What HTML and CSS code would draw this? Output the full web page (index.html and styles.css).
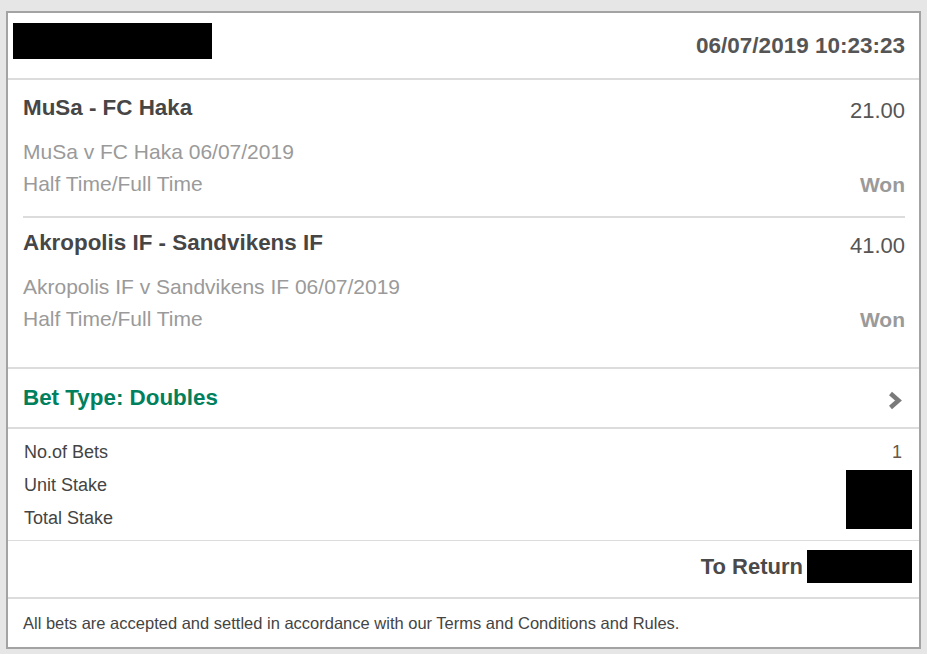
FILE: index.html
```html
<!DOCTYPE html>
<html lang="en">
<head>
<meta charset="utf-8">
<title>Bet receipt</title>
<link rel="stylesheet" href="styles.css">
</head>
<body>
<div class="card">
  <div class="header">
    <div class="redact redact-logo"></div>
    <div class="datetime">06/07/2019 10:23:23</div>
  </div>

  <div class="selections">
    <div class="selection">
      <div class="sel-top">
        <div class="sel-title">MuSa - FC Haka</div>
        <div class="sel-odds">21.00</div>
      </div>
      <div class="sel-event">MuSa v FC Haka 06/07/2019</div>
      <div class="sel-bottom">
        <div class="sel-market">Half Time/Full Time</div>
        <div class="sel-result">Won</div>
      </div>
    </div>
    <div class="selection">
      <div class="sel-top">
        <div class="sel-title">Akropolis IF - Sandvikens IF</div>
        <div class="sel-odds">41.00</div>
      </div>
      <div class="sel-event">Akropolis IF v Sandvikens IF 06/07/2019</div>
      <div class="sel-bottom">
        <div class="sel-market">Half Time/Full Time</div>
        <div class="sel-result">Won</div>
      </div>
    </div>
  </div>

  <div class="bet-type">
    <div class="bet-type-label">Bet Type: Doubles</div>
    <svg class="chevron" width="14" height="19" viewBox="0 0 14 19" aria-hidden="true">
      <polyline points="2.5,2.5 10.5,9.5 2.5,16.5" fill="none" stroke="#7a7a7a" stroke-width="4.5" stroke-linejoin="miter"/>
    </svg>
  </div>

  <div class="stakes">
    <div class="stake-label">No.of Bets</div>
    <div class="stake-value">1</div>
    <div class="stake-label">Unit Stake</div>
    <div class="redact redact-stake"></div>
    <div class="stake-label">Total Stake</div>
  </div>

  <div class="to-return">
    <div class="to-return-label">To Return</div>
    <div class="redact redact-return"></div>
  </div>

  <div class="footer">All bets are accepted and settled in accordance with our Terms and Conditions and Rules.</div>
</div>
</body>
</html>
```

FILE: styles.css
```css
html, body {
  margin: 0;
  padding: 0;
}

body {
  background: #e6e6e6;
  font-family: "Liberation Sans", Arial, sans-serif;
  color: #444;
  padding: 11px 0 0 6px;
  height: 654px;
  box-sizing: border-box;
  overflow: hidden;
}

.card {
  width: 915px;
  box-sizing: border-box;
  border: 2px solid #a3a3a3;
  background: #fff;
}

.redact {
  background: #000;
}

.header {
  height: 65px;
  border-bottom: 2px solid #dcdcdc;
  display: flex;
  justify-content: space-between;
  align-items: center;
  padding: 0 14px 0 5px;
}

.redact-logo {
  width: 199px;
  height: 36px;
  align-self: flex-start;
  margin-top: 10px;
}

.datetime {
  font-size: 22.5px;
  font-weight: bold;
  color: #555;
  line-height: 26px;
  margin-top: 1px;
}

.selections {
  padding: 3px 14px 16px 15px;
  border-bottom: 2px solid #dcdcdc;
}

.selection {
  padding: 11px 0 16px;
}

.selection + .selection {
  border-top: 2px solid #dcdcdc;
}

.sel-top,
.sel-bottom {
  display: flex;
  justify-content: space-between;
  align-items: flex-start;
}

.sel-top {
  height: 28px;
}

.sel-bottom {
  height: 32px;
}

.sel-title {
  font-size: 22.4px;
  font-weight: bold;
  color: #464646;
  line-height: 28px;
}

.sel-odds {
  font-size: 22px;
  color: #555;
  line-height: 28px;
  margin-top: 3px;
}

.sel-event {
  margin-top: 14px;
  font-size: 21px;
  line-height: 32px;
  color: #9a9a9a;
}

.sel-market {
  font-size: 21px;
  line-height: 32px;
  color: #9a9a9a;
}

.sel-result {
  font-size: 21px;
  font-weight: bold;
  line-height: 32px;
  color: #9a9a9a;
  margin-top: 1px;
}

.bet-type {
  height: 58px;
  border-bottom: 2px solid #dcdcdc;
  display: flex;
  justify-content: space-between;
  align-items: center;
  padding: 0 17px 0 15px;
}

.bet-type-label {
  font-size: 22.4px;
  font-weight: bold;
  color: #00805c;
}

.chevron {
  display: block;
  margin-top: 4px;
}

.stakes {
  display: grid;
  grid-template-columns: 1fr auto;
  grid-auto-rows: 33px;
  padding: 7px 7px 5px 16px;
  border-bottom: 1px solid #dcdcdc;
}

.stake-label {
  grid-column: 1;
  font-size: 18px;
  line-height: 33px;
  color: #444;
}

.stake-value {
  grid-column: 2;
  justify-self: end;
  font-size: 18px;
  line-height: 33px;
  color: #6a5645;
  margin-right: 10px;
}

.redact-stake {
  grid-column: 2;
  grid-row: 2 / span 2;
  justify-self: end;
  align-self: start;
  width: 66px;
  height: 59px;
  margin-top: 1px;
}

.to-return {
  height: 58px;
  box-sizing: border-box;
  border-bottom: 2px solid #dcdcdc;
  display: flex;
  justify-content: flex-end;
  align-items: flex-start;
  gap: 4px;
  padding: 9px 7px 0 0;
}

.to-return-label {
  font-size: 22px;
  font-weight: bold;
  color: #4a4a4a;
  line-height: 26px;
  margin-top: 4px;
}

.redact-return {
  width: 105px;
  height: 33px;
}

.footer {
  height: 48px;
  display: flex;
  align-items: center;
  padding-left: 15px;
  font-size: 16.5px;
  color: #444;
}
```
